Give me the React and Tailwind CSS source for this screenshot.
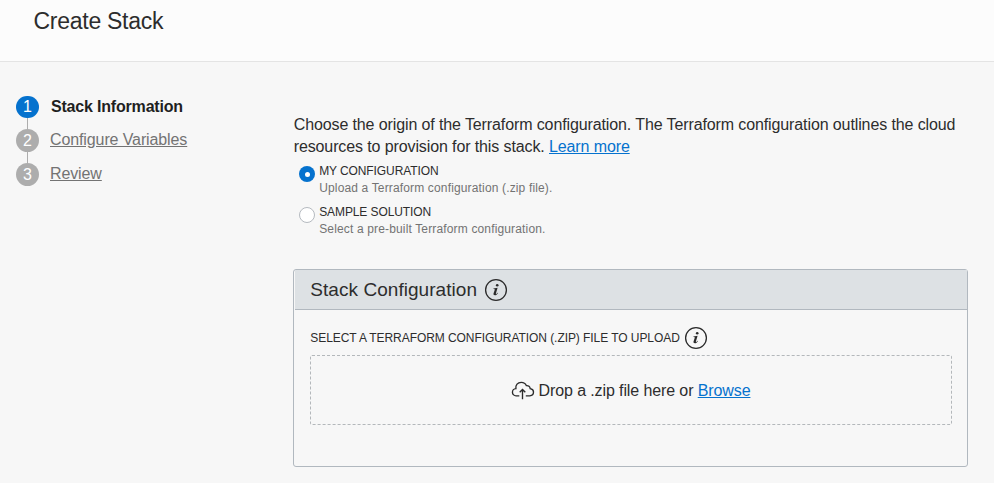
const steps = [
  { n: 1, label: 'Stack Information', active: true },
  { n: 2, label: 'Configure Variables' },
  { n: 3, label: 'Review' },
];

function InfoIcon({ className }) {
  return (
    <svg className={className} width="24" height="24" viewBox="0 0 24 24" fill="none">
      <circle cx="12" cy="12" r="10.4" stroke="#2b2b2b" strokeWidth="1.3" />
      <circle cx="13.2" cy="7.3" r="1.3" fill="#2b2b2b" />
      <path d="M9.4 10.4l4.2-.6-1.7 5.6c-.2.7.2.8.7.4.4-.3.7-.7 1-1.1l.4.3c-.9 1.5-2 2.3-3.1 2.3-1.2 0-1.7-.8-1.3-2l1.1-3.4c.2-.7 0-1-1.3-1z" fill="#2b2b2b" />
    </svg>
  );
}

function CloudUploadIcon() {
  return (
    <svg className="mt-px h-5 w-6 shrink-0" viewBox="0 0 24 20" fill="none" stroke="#2b2b2b" strokeWidth="1.35">
      <path d="M8.3 14.8H5.2A3.6 3.6 0 0 1 4.9 7.6C4.3 4.2 6.7 1.3 10.2 1.3c2.4 0 4.3 1.2 5.1 3.3 2.2-.3 3.7 1.1 3.9 3 2 .3 3.3 1.7 3.3 3.5 0 2.1-1.6 3.7-3.7 3.7h-4" />
      <path d="M11.5 18.3V8.4M8.7 11.2l2.8-2.8 2.8 2.8" />
    </svg>
  );
}

function Radio({ checked, label, hint }) {
  return (
    <label className="flex h-[41px]">
      <span
        className={
          checked
            ? 'mt-1 flex size-4 shrink-0 items-center justify-center rounded-full bg-[#0572ce]'
            : 'mt-1 size-4 shrink-0 rounded-full border border-[#b5bac0] bg-white'
        }
      >
        {checked && <span className="size-[5px] rounded-full bg-white" />}
      </span>
      <span className="ml-[4.2px] flex flex-col whitespace-nowrap pt-px text-[12px] leading-[17px]">
        <span className="tracking-[-0.1px] text-[#2d2d2d]">{label}</span>
        <span className="tracking-[0.15px] text-[#737373]">{hint}</span>
      </span>
    </label>
  );
}

export default function App() {
  return (
    <div className="h-[483px] w-[994px] overflow-hidden bg-[#f7f7f7] font-['Liberation_Sans',Arial,sans-serif] text-[#2d2d2d]">
      <header className="h-[62px] border-b border-[#e4e4e4] bg-[#fcfcfc] pl-[33.5px] pt-[5px]">
        <h1 className="text-[23px] leading-[32px] tracking-[-0.27px]">Create Stack</h1>
      </header>
      <div className="flex">
        <nav className="w-[293px] shrink-0 pl-4 pt-[34px]">
          {steps.map((s) => (
            <div key={s.n} className={s.active ? 'flex h-[33px] items-start' : 'flex h-[34px] items-start'}>
              <div className="flex h-full w-[23px] flex-col items-center">
                <span
                  className={
                    s.active
                      ? 'flex h-[22px] w-[23px] shrink-0 items-center justify-center rounded-full bg-[#0572ce] text-[16px] leading-none text-white'
                      : 'flex size-[23px] shrink-0 items-center justify-center rounded-full bg-[#adadad] text-[16px] leading-none text-white'
                  }
                >
                  {s.n}
                </span>
                {s.n < 3 && <span className="w-px flex-1 bg-[#adadad]" />}
              </div>
              <span
                className={
                  s.active
                    ? 'ml-3 text-[16px] font-bold leading-[21px] tracking-[-0.19px] text-[#1f1f1f]'
                    : 'ml-[11px] text-[16px] leading-[22px] tracking-[-0.11px] text-[#737373] underline'
                }
              >
                {s.label}
              </span>
            </div>
          ))}
        </nav>
        <main className="w-[675px] pt-[52px]">
          <p className="whitespace-nowrap pl-[0.7px] text-[16px] leading-[22px] tracking-[-0.112px]">
            Choose the origin of the Terraform configuration. The Terraform configuration outlines the cloud
            <br />
            resources to provision for this stack.{' '}
            <a className="text-[#0572ce] underline">Learn more</a>
          </p>
          <div className="h-[107px] pl-[6px] pt-1">
            <Radio checked label="MY CONFIGURATION" hint="Upload a Terraform configuration (.zip file)." />
            <Radio label="SAMPLE SOLUTION" hint="Select a pre-built Terraform configuration." />
          </div>
          <section className="mt-[4px] h-[198px] rounded-[3px] border border-[#b1b8bf]">
            <div className="ml-px flex h-10 items-center border-b border-[#b1b8bf] bg-[#dde1e4] pl-[15.3px]">
              <h2 className="pt-0.5 text-[19px] tracking-[0.05px]">Stack Configuration</h2>
              <InfoIcon className="ml-[7px]" />
            </div>
            <div className="pl-4 pr-[15px] pt-[15px]">
              <div className="flex h-[30px] items-center pb-[4px]">
                <span className="whitespace-nowrap pb-px pl-[0.3px] text-[12px] tracking-[-0.065px]">
                  SELECT A TERRAFORM CONFIGURATION (.ZIP) FILE TO UPLOAD
                </span>
                <InfoIcon className="ml-[4.5px]" />
              </div>
              <div className="flex h-[70px] items-center justify-center rounded-[2px] border border-dashed border-[#b4b8bb] pr-[1px]">
                <CloudUploadIcon />
                <span className="ml-[4px] whitespace-nowrap pt-0.5 text-[16px] tracking-[-0.108px]">
                  Drop a .zip file here or <a className="text-[#0572ce] underline">Browse</a>
                </span>
              </div>
            </div>
          </section>
        </main>
      </div>
    </div>
  );
}
